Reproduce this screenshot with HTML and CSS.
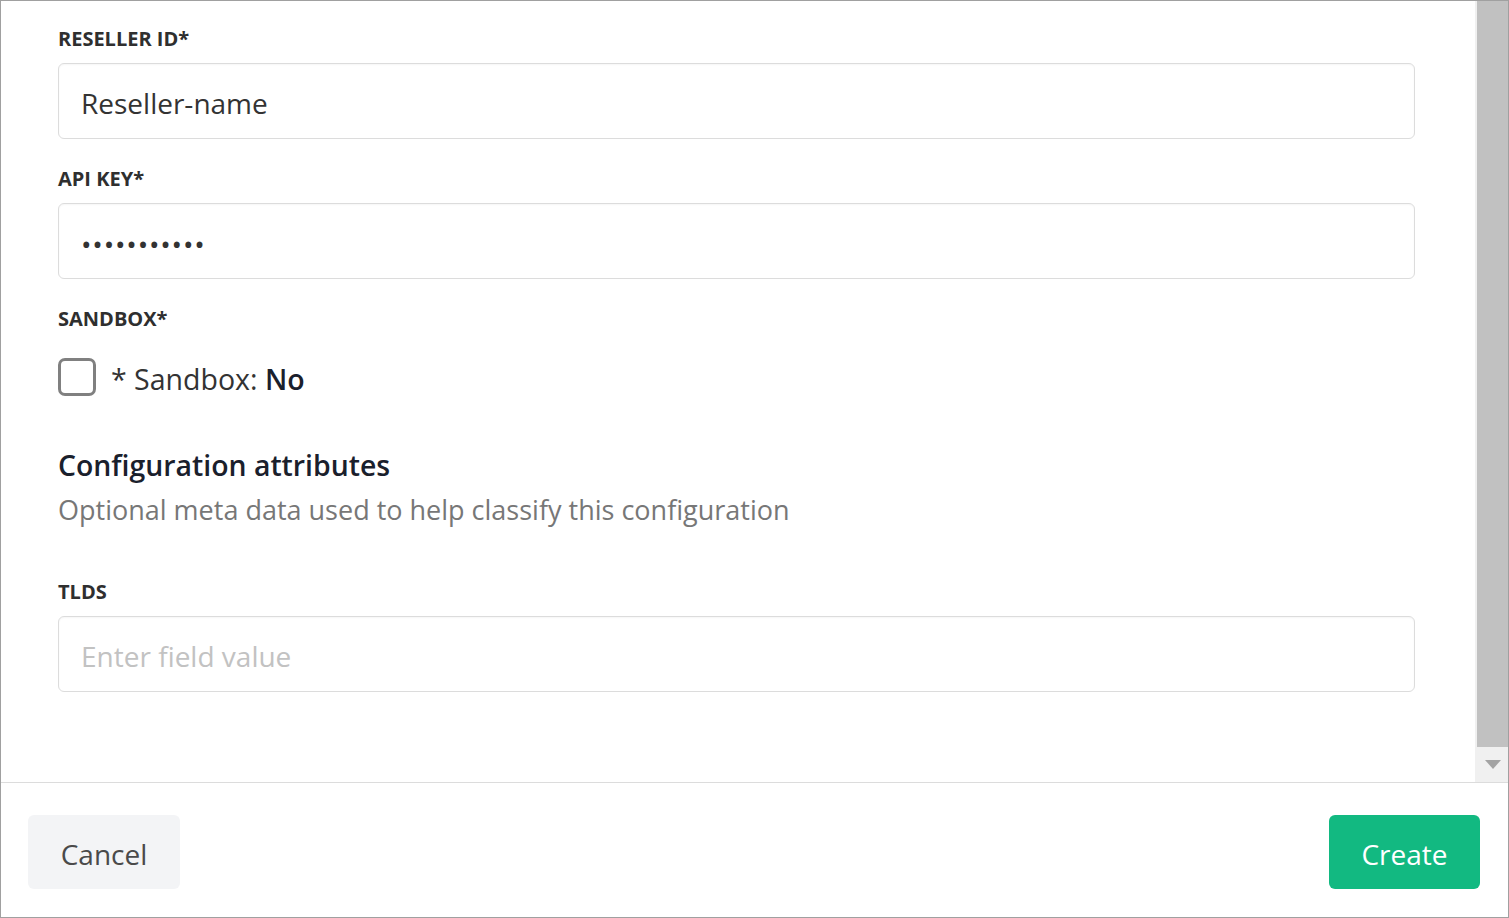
FILE: index.html
```html
<!DOCTYPE html>
<html lang="en">
<head>
<meta charset="utf-8">
<title>Reseller configuration</title>
<link rel="stylesheet" href="styles.css">
</head>
<body>
<div class="frame">
  <div class="main">
    <form class="content">
      <div class="field">
        <label class="label" for="reseller">RESELLER ID*</label>
        <input class="input" id="reseller" type="text" value="Reseller-name">
      </div>
      <div class="field">
        <label class="label" for="apikey">API KEY*</label>
        <input class="input password" id="apikey" type="password" value="abcdefghijk">
      </div>
      <div class="field">
        <span class="label">SANDBOX*</span>
        <label class="check-row">
          <span class="checkbox"></span>
          <span class="check-text">* Sandbox: <strong>No</strong></span>
        </label>
      </div>
      <div class="section">
        <h2 class="section-title">Configuration attributes</h2>
        <p class="section-sub">Optional meta data used to help classify this configuration</p>
      </div>
      <div class="field">
        <label class="label" for="tlds">TLDS</label>
        <input class="input" id="tlds" type="text" placeholder="Enter field value">
      </div>
    </form>
    <div class="scrollbar">
      <div class="thumb"></div>
      <div class="arrow">
        <svg width="16" height="9" viewBox="0 0 16 9"><path d="M0 0H16L8 9Z" fill="#a3a3a3"/></svg>
      </div>
    </div>
  </div>
  <div class="footer">
    <button class="btn btn-cancel" type="button">Cancel</button>
    <button class="btn btn-create" type="button">Create</button>
  </div>
</div>
</body>
</html>
```

FILE: styles.css
```css
* { box-sizing: border-box; }
html, body { margin: 0; padding: 0; background: #fff; }
body { font-family: "Open Sans", "Noto Sans", sans-serif; color: #333; }

.frame {
  width: 1509px;
  height: 918px;
  border: 1px solid #a0a0a0;
  display: flex;
  flex-direction: column;
  overflow: hidden;
}

.main {
  height: 781px;
  display: flex;
  flex-direction: row;
  flex: none;
}

.content {
  flex: 1;
  margin: 0;
  padding: 26px 60px 0 57px;
}

.field { margin-bottom: 28px; }

.label {
  display: block;
  font-size: 20px;
  font-weight: 700;
  line-height: 24px;
  color: #2f2f2f;
  margin-bottom: 12px;
}

.input {
  display: block;
  width: 100%;
  height: 76px;
  border: 1px solid #dcdcdc;
  border-radius: 6px;
  padding: 4px 22px 0;
  font-family: "Open Sans", "Noto Sans", sans-serif;
  font-size: 28px;
  color: #333;
  background: #fff;
  box-shadow: inset 0 1px 2px rgba(0, 0, 0, 0.04);
  outline: none;
}
.input::placeholder { color: #c2c2c2; }
.password { letter-spacing: 0.8px; padding-top: 6px; }

.check-row {
  display: flex;
  align-items: center;
  margin-top: 27px;
  height: 38px;
}
.checkbox {
  width: 38px;
  height: 38px;
  border: 3px solid #808080;
  border-radius: 7px;
  flex: none;
}
.check-text {
  margin-left: 15px;
  padding-top: 3px;
  font-size: 28.5px;
  color: #333;
}
.check-text strong { font-weight: 600; color: #1a202c; }

.section { margin-top: 51px; margin-bottom: 52px; }
.section-title {
  margin: 0;
  font-size: 28.4px;
  line-height: 36px;
  font-weight: 600;
  color: #1a202c;
}
.section-sub {
  margin: 9px 0 0;
  font-size: 27px;
  line-height: 36px;
  color: #777;
}

.scrollbar {
  width: 33px;
  flex: none;
  display: flex;
  flex-direction: column;
  background: #f0f0f0;
}
.thumb {
  flex: 1;
  margin-left: 2px;
  background: #c1c1c1;
}
.arrow {
  height: 35px;
  display: flex;
  align-items: center;
  justify-content: center;
  padding-left: 2px;
}

.footer {
  flex: 1;
  border-top: 1px solid #dcdcdc;
  display: flex;
  justify-content: space-between;
  align-items: flex-start;
  padding: 32px 28px 0 27px;
}

.btn {
  height: 74px;
  width: 152px;
  border: none;
  border-radius: 6px;
  padding: 3px 0 0;
  font-family: "Open Sans", "Noto Sans", sans-serif;
  font-size: 28px;
  cursor: pointer;
}
.btn-cancel { background: #f3f4f6; color: #4a4a4a; }
.btn-create { background: #12b981; color: #fff; width: 151px; }
```
